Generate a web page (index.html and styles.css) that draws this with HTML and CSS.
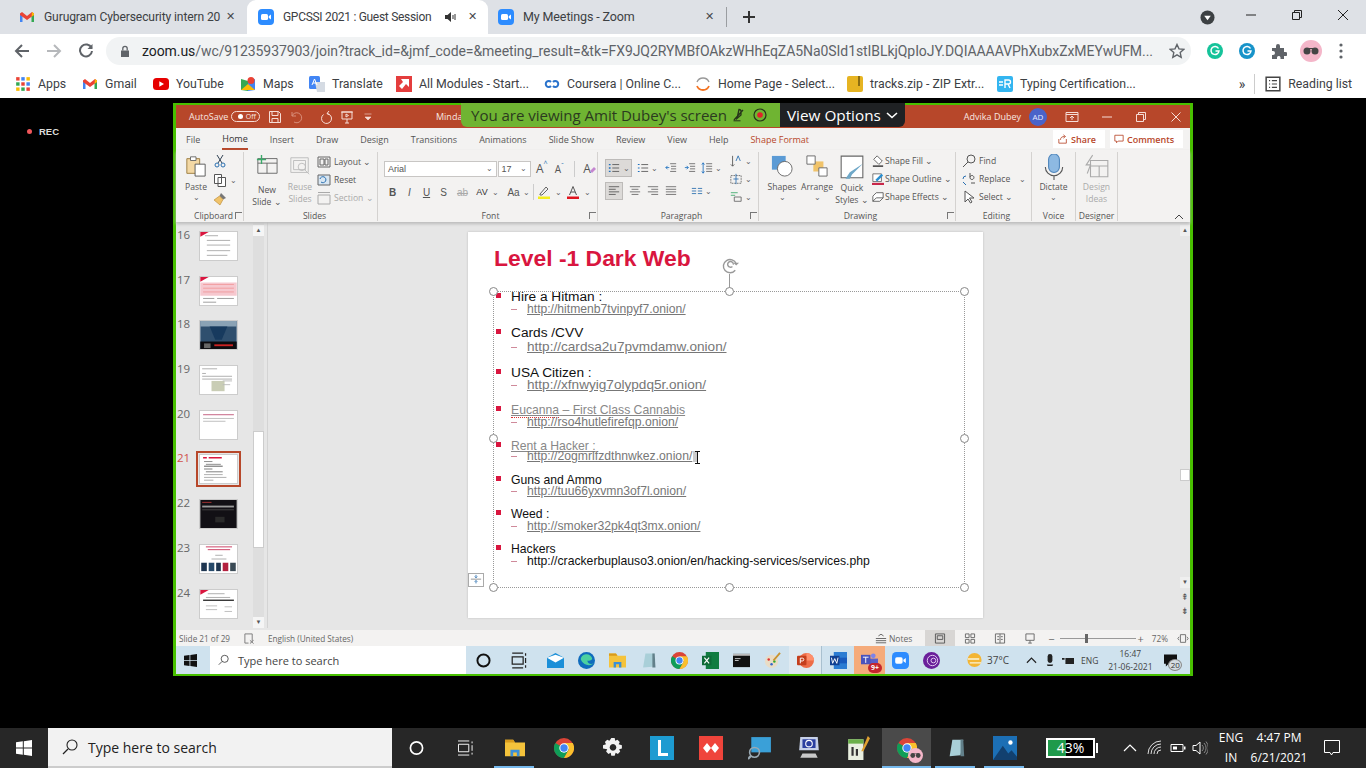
FILE: index.html
```html
<!DOCTYPE html>
<html lang="en">
<head>
    <meta charset="UTF-8">
    <title>GPCSSI 2021 : Guest Session</title>
    <link rel="stylesheet" href="styles.css">
</head>
<body>
<svg class="defs" width="0" height="0">
    <symbol id="i-zoom" viewBox="0 0 16 16"><rect width="16" height="16" rx="4" fill="#2d8cff"/><rect x="3" y="5" width="7" height="6" rx="1.5" fill="#fff"/><path d="M10.7 7.3 13 5.6v4.8l-2.3-1.700z" fill="#fff"/></symbol>
    <symbol id="i-gmail" viewBox="0 0 16 16"><path d="M1 4v9h2.500V7z" fill="#4285f4"/><path d="M15 4v9h-2.500V7z" fill="#34a853"/><path d="M1 4.500 3 3l5 4 5-4 2 1.500V6L8 11 1 6z" fill="#ea4335"/><path d="M13 3l2 1.500V6l-2.500 1.800z" fill="#fbbc04"/></symbol>
    <symbol id="i-chrome" viewBox="0 0 20 20"><circle cx="10" cy="10" r="10" fill="#db4437"/><path d="M10 10 1.300 5A10 10 0 0 0 10 20l5-8.700z" fill="#0f9d58"/><path d="M10 5h8.700A10 10 0 0 1 10 20l5-8.700z" fill="#fbc02d"/><circle cx="10" cy="10" r="4.700" fill="#fff"/><circle cx="10" cy="10" r="3.700" fill="#4285f4"/></symbol>
    <symbol id="i-win" viewBox="0 0 16 16"><path d="M0 2.300 6.800 1.300V7.600H0zM7.800 1.200 16 0V7.600H7.800zM0 8.500H6.800V14.700L0 13.700zM7.800 8.500H16V16L7.800 14.800z" fill="currentColor"/></symbol>
    <symbol id="i-folder" viewBox="0 0 22 20"><path d="M0 1h9l2 3h11v15H0z" fill="#f5c33b"/><path d="M0 1h9l2 3H0z" fill="#d99b1c"/><path d="M6 19v-7h10v7h-3v-4H9v4z" fill="#3a8fd8"/></symbol>
    <symbol id="i-note" viewBox="0 0 20 22"><path d="M6 2h12l-3 17-12 1z" fill="#a9cfd8"/><path d="M15 2h3l1 18h-4z" fill="#62808a"/></symbol>
    <symbol id="i-glasses" viewBox="0 0 22 22"><circle cx="11" cy="11" r="11" fill="#f4b6c9"/><circle cx="7" cy="11" r="3.500" fill="#444"/><circle cx="15" cy="11" r="3.500" fill="#444"/><path d="M7 8.500h8" stroke="#444"/></symbol>
</svg>

<header class="chrome">
    <div class="tabstrip">
        <div class="tab">
            <svg class="fav"><use href="#i-gmail"/></svg>
            <span class="tab-title">Gurugram Cybersecurity intern 20</span>
            <span class="tab-x">✕</span>
        </div>
        <div class="tab tab-active">
            <svg class="fav"><use href="#i-zoom"/></svg>
            <span class="tab-title tab-title-short">GPCSSI 2021 : Guest Session</span>
            <svg class="tab-sound" viewBox="0 0 12 12"><path d="M1 4h2.500L7 1v10L3.500 8H1z" fill="#333"/><path d="M9 4v4M11 3v6" stroke="#333"/></svg>
            <span class="tab-x">✕</span>
        </div>
        <div class="tab tab-last">
            <svg class="fav"><use href="#i-zoom"/></svg>
            <span class="tab-title">My Meetings - Zoom</span>
            <span class="tab-x">✕</span>
        </div>
        <span class="tab-sep"></span>
        <svg class="tab-new" viewBox="0 0 14 14"><path d="M7 1v12M1 7h12" stroke="#333" stroke-width="2"/></svg>
        <span class="spacer"></span>
        <svg class="win-menu" viewBox="0 0 16 16"><circle cx="8" cy="8" r="7.500" fill="#3c4043"/><path d="M4.500 6h7L8 11z" fill="#fff"/></svg>
        <svg class="win-btn" viewBox="0 0 12 12"><path d="M1 6h10" stroke="#222"/></svg>
        <svg class="win-btn" viewBox="0 0 12 12"><path d="M1.500 3.500h7v7h-7zM3.500 3.500v-2h7v7h-2" fill="none" stroke="#222"/></svg>
        <svg class="win-btn" viewBox="0 0 12 12"><path d="M1 1l10 10M11 1 1 11" stroke="#222"/></svg>
    </div>
    <div class="toolbar">
        <svg class="nav" viewBox="0 0 16 16"><path d="M15 8H2M8 2 2 8l6 6" fill="none" stroke="#5f6368" stroke-width="2"/></svg>
        <svg class="nav" viewBox="0 0 16 16"><path d="M1 8h13M8 2l6 6-6 6" fill="none" stroke="#b6b8bb" stroke-width="2"/></svg>
        <svg class="nav" viewBox="0 0 16 16"><path d="M13.500 5A6 6 0 1 0 14 8" fill="none" stroke="#5f6368" stroke-width="2"/><path d="M14.500 1v5h-5z" fill="#5f6368"/></svg>
        <div class="omnibox">
            <svg class="lock" viewBox="0 0 10 13"><path d="M1 5.500h8V12H1z" fill="#5f6368"/><path d="M2.800 5.500V3.500a2.200 2.200 0 0 1 4.400 0v2" fill="none" stroke="#5f6368" stroke-width="1.300"/></svg>
            <span class="url"><b>zoom.us</b>/wc/91235937903/join?track_id=&amp;jmf_code=&amp;meeting_result=&amp;tk=FX9JQ2RYMBfOAkzWHhEqZA5Na0SId1stIBLkjQpIoJY.DQIAAAAVPhXubxZxMEYwUFM...</span>
            <svg class="star" viewBox="0 0 16 16"><path d="M8 1.500l2 4.400 4.700.5-3.500 3.200 1 4.700L8 11.900l-4.200 2.400 1-4.700-3.500-3.200L6 5.900z" fill="none" stroke="#5f6368" stroke-width="1.400"/></svg>
        </div>
        <div class="ext">
            <svg class="ext-i" viewBox="0 0 16 16"><circle cx="8" cy="8" r="8" fill="#15c39a"/><path d="M11.500 5.500A4 4 0 1 0 12 8H8.500" fill="none" stroke="#fff" stroke-width="1.500"/></svg>
            <svg class="ext-i" viewBox="0 0 16 16"><circle cx="8" cy="8" r="8" fill="#1793c9"/><path d="M11.500 5.500A4 4 0 1 0 12 8H8.500" fill="none" stroke="#fff" stroke-width="1.500"/></svg>
            <svg class="ext-i" viewBox="0 0 16 16"><path d="M1 5h4V3a2 2 0 0 1 4 0v2h4v4h1.500a2 2 0 0 1 0 4H13v3H9.500v-1.500a1.800 1.800 0 0 0-3.500 0V16H1v-4h1a2 2 0 0 0 0-4H1z" fill="#5f6368"/></svg>
            <svg class="ext-av"><use href="#i-glasses"/></svg>
            <svg class="ext-dots" viewBox="0 0 4 16"><circle cx="2" cy="2" r="1.600" fill="#5f6368"/><circle cx="2" cy="8" r="1.600" fill="#5f6368"/><circle cx="2" cy="14" r="1.600" fill="#5f6368"/></svg>
        </div>
    </div>
    <div class="bookmarks">
        <span class="bm bm-apps"><svg class="bm-i" viewBox="0 0 14 14"><path d="M1 1h3v3H1z" fill="#ea4335"/><path d="M5.500 1h3v3h-3z" fill="#4285f4"/><path d="M10 1h3v3h-3z" fill="#fbbc04"/><path d="M1 5.500h3v3H1z" fill="#34a853"/><path d="M5.500 5.500h3v3h-3z" fill="#ea4335"/><path d="M10 5.500h3v3h-3z" fill="#4285f4"/><path d="M1 10h3v3H1z" fill="#fbbc04"/><path d="M5.500 10h3v3h-3z" fill="#34a853"/><path d="M10 10h3v3h-3z" fill="#ea4335"/></svg>Apps</span>
        <span class="bm bm-gmail"><svg class="bm-i"><use href="#i-gmail"/></svg>Gmail</span>
        <span class="bm bm-yt"><svg class="bm-i" viewBox="0 0 16 16"><rect y="2" width="16" height="12" rx="3.500" fill="#e60000"/><path d="M6.300 5.200 11 8l-4.700 2.800z" fill="#fff"/></svg>YouTube</span>
        <span class="bm bm-maps"><svg class="bm-i" viewBox="0 0 16 16"><path d="M1 3l7 2v10l-7-1z" fill="#34a853"/><path d="M8 5l7-2v11l-7 1z" fill="#4285f4"/><path d="M1 14 8 8l7 6z" fill="#fbbc04"/><circle cx="11" cy="4.500" r="3.500" fill="#ea4335"/></svg>Maps</span>
        <span class="bm bm-tr"><svg class="bm-i" viewBox="0 0 16 16"><rect width="11" height="13" rx="1.500" fill="#4285f4"/><path d="M6 6h10v10H8z" fill="#d5dbe3"/><path d="M3 9l2.500-6L8 9M4 7h3" fill="none" stroke="#fff"/></svg>Translate</span>
        <span class="bm bm-mod"><svg class="bm-i" viewBox="0 0 16 16"><rect width="16" height="16" fill="#e43d3d"/><path d="M5 3h8v8l-3-3-4 5-3-3 4-4z" fill="#fff"/></svg>All Modules - Start...</span>
        <span class="bm bm-cou"><svg class="bm-i" viewBox="0 0 16 16"><path d="M7 6a3 3 0 1 0 0 4M9 10a3 3 0 1 0 0-4" fill="none" stroke="#2a73cc" stroke-width="2"/></svg>Coursera | Online C...</span>
        <span class="bm bm-home"><svg class="bm-i" viewBox="0 0 16 16"><path d="M2 6a6.500 6.500 0 0 1 12 0" fill="none" stroke="#999" stroke-width="1.300"/><path d="M2 10a6.500 6.500 0 0 0 12 0" fill="none" stroke="#f47321" stroke-width="1.800"/></svg>Home Page - Select...</span>
        <span class="bm bm-zip"><svg class="bm-i" viewBox="0 0 16 16"><rect width="16" height="16" rx="2" fill="#e6b422"/><path d="M11 0h2v10h-2z" fill="#8a6d12"/></svg>tracks.zip - ZIP Extr...</span>
        <span class="bm bm-typ"><svg class="bm-i" viewBox="0 0 16 16"><rect width="16" height="16" rx="2" fill="#33b5f0"/><path d="M2 6h4M2 9h4M8 12V4h3.500a2 2 0 0 1 0 4H8m3 0 2 4" fill="none" stroke="#fff" stroke-width="1.400"/></svg>Typing Certification...</span>
        <span class="spacer"></span>
        <span class="bm-more">»</span>
        <span class="bm-sep"></span>
        <span class="bm bm-read"><svg class="bm-i" viewBox="0 0 14 14"><path d="M1 1h12v12H1z" fill="none" stroke="#444" stroke-width="1.300"/><path d="M3.500 4h1M6 4h4.500M3.500 7h1M6 7h4.500M3.500 10h1M6 10h4.500" stroke="#444"/></svg>Reading list</span>
    </div>
</header>

<main class="stage">
    <div class="rec"><span class="rec-dot"></span>REC</div>
    <div class="share">
        <div class="banner">
            <span>You are viewing Amit Dubey's screen</span>
            <svg class="banner-mic" viewBox="0 0 14 14"><path d="M8 1.500a2 2 0 0 1 2 2V7L6 10.500zM3 12 12 2" fill="none" stroke="#26331a" stroke-width="1.300"/><path d="M2.500 12.800h7" stroke="#26331a"/></svg>
            <svg class="banner-rec" viewBox="0 0 14 14"><circle cx="7" cy="7" r="6" fill="none" stroke="#26331a" stroke-width="1.200"/><circle cx="7" cy="7" r="2.800" fill="#e0222a"/></svg>
        </div>
        <div class="view-options">View Options<svg class="vo-chev" viewBox="0 0 12 7"><path d="M1 1l5 4.500L11 1" fill="none" stroke="#fff" stroke-width="1.600"/></svg></div>

        <div class="titlebar">
            <span class="autosave">AutoSave</span>
            <span class="toggle"><i></i>Off</span>
            <svg class="tb-i tb-save" viewBox="0 0 14 14"><path d="M1.500 1.500h9l2 2v9h-11zM4 1.500v4h6v-4M4 12.500v-4h6v4" fill="none" stroke="#f6ddd6"/></svg>
            <svg class="tb-i tb-undo" viewBox="0 0 14 14"><path d="M3 2v4h4M3 6a5 5 0 1 1 2 6" fill="none" stroke="#d98f7b"/></svg>
            <svg class="tb-i tb-redo" viewBox="0 0 14 14"><path d="M10 1l-2 2.500L10.500 5M8 3.500a5 5 0 1 1-3.500 1" fill="none" stroke="#f6ddd6"/></svg>
            <svg class="tb-i tb-pres" viewBox="0 0 14 14"><path d="M2 2h10v7H2zM1 2h12M7 9v4M5 13h4M6 4v3l2.500-1.500z" fill="none" stroke="#f6ddd6"/></svg>
            <svg class="tb-i tb-more" viewBox="0 0 14 14"><path d="M3.500 4h7M4 7h6l-3 3z" fill="#f6ddd6" stroke="#f6ddd6" stroke-width=".6"/></svg>
            <span class="doc-name">Minda</span>
            <span class="spacer"></span>
            <span class="user">Advika Dubey</span>
            <span class="avatar">AD</span>
            <svg class="tb-i tb-disp" viewBox="0 0 14 14"><path d="M1 2.500h12v9H1zM1 4.500h12M7 10V6M5 8l2-2 2 2" fill="none" stroke="#f6ddd6"/></svg>
            <svg class="tb-i tb-min" viewBox="0 0 14 14"><path d="M2 7h10" stroke="#f6ddd6"/></svg>
            <svg class="tb-i tb-max" viewBox="0 0 14 14"><path d="M2.500 4.500h7v7h-7zM4.500 4.500v-2h7v7h-2" fill="none" stroke="#f6ddd6"/></svg>
            <svg class="tb-i tb-close" viewBox="0 0 14 14"><path d="M2.500 2.500l9 9M11.500 2.500l-9 9" stroke="#f6ddd6"/></svg>
        </div>

        <nav class="tabs">
            <span>File</span>
            <span class="tabs-on">Home</span>
            <span>Insert</span>
            <span>Draw</span>
            <span>Design</span>
            <span>Transitions</span>
            <span>Animations</span>
            <span>Slide Show</span>
            <span>Review</span>
            <span>View</span>
            <span>Help</span>
            <span class="tabs-ctx">Shape Format</span>
            <span class="spacer"></span>
            <span class="tabs-btn tabs-share"><svg viewBox="0 0 12 12" class="tabs-btn-i"><path d="M1 6v5h9V6M3 7c0-3 2-4 5-4M6.500 1 9 3 6.500 5" fill="none" stroke="#b7472a"/></svg>Share</span>
            <span class="tabs-btn tabs-comm"><svg viewBox="0 0 12 12" class="tabs-btn-i"><path d="M1 1.500h10v7H5l-2 2v-2H1z" fill="none" stroke="#b7472a"/></svg>Comments</span>
        </nav>

        <div class="ribbon">
            <section class="grp grp-clip">
                <div class="grp-body">
                    <div class="big big-paste">
                        <svg class="big-i" viewBox="0 0 24 24"><path d="M2 4h14v16H2z" fill="#f3d8a4" stroke="#9a7a3c"/><path d="M6 2h6v4H6z" fill="#fff" stroke="#666"/><path d="M11 10h11v13H11z" fill="#fff" stroke="#555"/></svg>
                        <span>Paste</span><span class="chev">⌄</span>
                    </div>
                    <div class="col col-clip">
                        <svg class="ico" viewBox="0 0 14 14"><path d="M4 1l5 8M10 1 5 9" stroke="#345" fill="none"/><circle cx="4" cy="11" r="2" fill="none" stroke="#2a6fb0"/><circle cx="10" cy="11" r="2" fill="none" stroke="#2a6fb0"/></svg>
                        <span class="row"><svg class="ico" viewBox="0 0 14 14"><path d="M1.500 1.500h7v9h-7zM5 4.500h7.500v9H5z" fill="#fff" stroke="#555"/></svg><span class="chev">⌄</span></span>
                        <svg class="ico" viewBox="0 0 14 14"><path d="M8 1l5 5-3 1.500L6.500 4z" fill="#777"/><path d="M6.500 4 10 7.500 7 13 1 8z" fill="#f0c36a" stroke="#b8862f" stroke-width=".6"/></svg>
                    </div>
                </div>
                <div class="grp-label">Clipboard<i class="launch"></i></div>
            </section>
            <section class="grp grp-slides">
                <div class="grp-body">
                    <div class="big big-new">
                        <svg class="big-i" viewBox="0 0 24 24"><path d="M2 5h21v16H2zM2 10h21M12 10v11" fill="none" stroke="#666"/><path d="M1 6h10M6 1v10" stroke="#3ca96a" stroke-width="1.500"/></svg>
                        <span class="big-gap">New</span><span>Slide ⌄</span>
                    </div>
                    <div class="big big-reuse off">
                        <svg class="big-i" viewBox="0 0 24 24"><path d="M2 3h19v16H2zM5 6h13v10H5z" fill="none" stroke="#bbb"/><circle cx="14" cy="13" r="4" fill="none" stroke="#bbb"/><path d="M17 16l5 5" stroke="#bbb"/></svg>
                        <span>Reuse</span><span>Slides</span>
                    </div>
                    <div class="col col-slides">
                        <span class="row"><svg class="ico" viewBox="0 0 14 14"><path d="M1 2h12v10H1zM3 4h4v6H3zM8 4h3v6H8z" fill="none" stroke="#666"/></svg>Layout ⌄</span>
                        <span class="row"><svg class="ico" viewBox="0 0 14 14"><path d="M1 2h12v10H1z" fill="#d8e6f2" stroke="#666"/><path d="M3 6a3 3 0 1 1 1 3" fill="none" stroke="#2a6fb0"/></svg>Reset</span>
                        <span class="row off"><svg class="ico" viewBox="0 0 14 14"><path d="M1 1.500h12M1 4h12v9H1z" fill="none" stroke="#aaa"/></svg>Section ⌄</span>
                    </div>
                </div>
                <div class="grp-label">Slides</div>
            </section>
            <section class="grp grp-font">
                <div class="grp-body grp-rows">
                    <div class="row font-row1">
                        <span class="box box-font">Arial<b class="chev">⌄</b></span>
                        <span class="box box-size">17<b class="chev">⌄</b></span>
                        <span class="glyph-a">A<sup>^</sup></span>
                        <span class="glyph-a glyph-a2">A<sup>ˇ</sup></span>
                        <i class="vsep"></i>
                        <span class="glyph-a glyph-clear">A<svg viewBox="0 0 8 8" class="eraser"><path d="M1 5l4-4 2 2-4 4z" fill="#c586d0"/></svg></span>
                    </div>
                    <div class="row font-row2">
                        <b class="fmt">B</b><em class="fmt">I</em><u class="fmt">U</u><span class="fmt fmt-s">S</span><s class="fmt fmt-ab">ab</s>
                        <span class="fmt fmt-av">AV</span><span class="chev">⌄</span>
                        <span class="fmt fmt-aa">Aa</span><span class="chev">⌄</span>
                        <i class="vsep"></i>
                        <span class="fmt fmt-hl">
                            <svg class="ico" viewBox="0 0 14 14"><path d="M3 9l6-7 2 2-6 6H3z" fill="none" stroke="#666"/><path d="M1 11.500h12V14H1z" fill="#f5ee1c"/></svg></span><span class="chev">⌄</span>
                        <span class="fmt fmt-col">
                            <svg class="ico" viewBox="0 0 14 14"><path d="M3.500 10 7 1.500l3.500 8.500M5 7h4" fill="none" stroke="#555"/><path d="M1 11.500h12V14H1z" fill="#e0141e"/></svg></span><span class="chev">⌄</span>
                    </div>
                </div>
                <div class="grp-label">Font<i class="launch"></i></div>
            </section>
            <section class="grp grp-para">
                <div class="grp-body grp-para-body">
                    <div class="grp-rows">
                        <div class="row para-row1">
                            <span class="para-on para-bul"><svg class="ico" viewBox="0 0 14 14"><path d="M1 3h2M1 7h2M1 11h2" stroke="#1e70c0" stroke-width="1.500"/><path d="M5 3h8M5 7h8M5 11h8" stroke="#555"/></svg><span class="chev">⌄</span></span>
                            <span class="para-ic"><svg class="ico" viewBox="0 0 14 14"><path d="M1 3h2M1 7h2M1 11h2" stroke="#1e70c0" stroke-width="1.200"/><path d="M5 3h8M5 7h8M5 11h8" stroke="#555"/></svg><span class="chev">⌄</span></span>
                            <svg class="ico para-in" viewBox="0 0 14 14"><path d="M6 2h7M7 5h6M7 8h6M6 11h7" stroke="#666"/><path d="M5 6.500H1M3 4.500l-2 2 2 2" fill="none" stroke="#1e70c0"/></svg>
                            <svg class="ico para-in" viewBox="0 0 14 14"><path d="M6 2h7M7 5h6M7 8h6M6 11h7" stroke="#666"/><path d="M1 6.500h4M3 4.500l2 2-2 2" fill="none" stroke="#1e70c0"/></svg>
                            <span class="para-ic"><svg class="ico" viewBox="0 0 14 14"><path d="M6 2h7M6 5h7M6 8h7M6 11h7" stroke="#666"/><path d="M2.500 1v12M1 3l1.500-2L4 3M1 11l1.500 2L4 11" fill="none" stroke="#1e70c0"/></svg><span class="chev">⌄</span></span>
                        </div>
                        <div class="row para-row2">
                            <span class="para-on para-left"><svg class="ico" viewBox="0 0 14 14"><path d="M1 2h12M1 5h8M1 8h12M1 11h8" stroke="#555"/></svg></span>
                            <svg class="ico para-al" viewBox="0 0 14 14"><path d="M1 2h12M3 5h8M1 8h12M3 11h8" stroke="#666"/></svg>
                            <svg class="ico para-al" viewBox="0 0 14 14"><path d="M1 2h12M5 5h8M1 8h12M5 11h8" stroke="#666"/></svg>
                            <svg class="ico para-al" viewBox="0 0 14 14"><path d="M1 2h12M1 5h12M1 8h12M1 11h12" stroke="#666"/></svg>
                            <span class="para-ic para-cols"><svg class="ico" viewBox="0 0 14 14"><path d="M1 4h5M8 4h5M1 7h5M8 7h5M1 10h5M8 10h5" stroke="#2a6fb0"/></svg><span class="chev">⌄</span></span>
                        </div>
                    </div>
                    <div class="col col-para">
                        <span class="row"><svg class="ico" viewBox="0 0 14 14"><path d="M3 1v12M1 11l2 2 2-2" fill="none" stroke="#555"/><path d="M7 7l2.500-6L12 7" fill="none" stroke="#2a6fb0"/></svg><span class="chev">⌄</span></span>
                        <span class="row"><svg class="ico" viewBox="0 0 14 14"><path d="M1 3h12v9H1z" fill="none" stroke="#666" stroke-dasharray="2 1"/><path d="M7 1v12M4 7h6" stroke="#2a6fb0"/></svg><span class="chev">⌄</span></span>
                        <span class="row"><svg class="ico" viewBox="0 0 14 14"><path d="M1 2h8M1 5h5" stroke="#3ca96a"/><path d="M5 7h8v5H5z" fill="none" stroke="#666"/></svg><span class="chev">⌄</span></span>
                    </div>
                </div>
                <div class="grp-label">Paragraph<i class="launch"></i></div>
            </section>
            <section class="grp grp-draw">
                <div class="grp-body">
                    <div class="big big-draw">
                        <svg class="big-i" viewBox="0 0 24 24"><path d="M1 1h15v15H1z" fill="#5b9bd5"/><circle cx="15" cy="15" r="8" fill="#fff" stroke="#666"/></svg>
                        <span>Shapes</span><span class="chev">⌄</span>
                    </div>
                    <div class="big big-draw">
                        <svg class="big-i" viewBox="0 0 24 24"><path d="M8 7h11v11H8z" fill="#f0c36a"/><path d="M1 1h9v9H1zM14 14h9v9h-9z" fill="#fff" stroke="#666"/></svg>
                        <span>Arrange</span><span class="chev">⌄</span>
                    </div>
                    <div class="big big-draw">
                        <svg class="big-i big-i-lg" viewBox="0 0 24 24"><path d="M2 1h20v20H2z" fill="#fff" stroke="#666"/><path d="M22 8 12 18l-2 4-4 0 2-3 2-3z" fill="#6fa8c8"/></svg>
                        <span>Quick</span><span>Styles ⌄</span>
                    </div>
                    <div class="col col-draw">
                        <span class="row"><svg class="ico" viewBox="0 0 14 14"><path d="M6 1l6 6-4 4-6-6z" fill="#fff" stroke="#555"/><path d="M1 12h12v2H1z" fill="#555"/></svg>Shape Fill ⌄</span>
                        <span class="row"><svg class="ico" viewBox="0 0 14 14"><path d="M1 1h10v9H1z" fill="#fff" stroke="#666"/><path d="M4 8l7-7 2 2-7 7z" fill="#2a8fd0"/><path d="M0 11.500h14V14H0z" fill="#c8284a"/></svg>Shape Outline ⌄</span>
                        <span class="row"><svg class="ico" viewBox="0 0 14 14"><path d="M5 2h8v6l-4 4H1V6z" fill="#fff" stroke="#555"/><path d="M1 12 5 8h8" stroke="#555" fill="none"/></svg>Shape Effects ⌄</span>
                    </div>
                </div>
                <div class="grp-label">Drawing<i class="launch"></i></div>
            </section>
            <section class="grp grp-edit">
                <div class="grp-body">
                    <div class="col col-edit">
                        <span class="row"><svg class="ico" viewBox="0 0 14 14"><circle cx="9" cy="5" r="4" fill="none" stroke="#555"/><path d="M6 8 1 13" stroke="#555"/></svg>Find</span>
                        <span class="row"><svg class="ico" viewBox="0 0 14 14"><path d="M1 7a3 3 0 0 1 3-3M1 10l3 3" fill="none" stroke="#2a6fb0"/><path d="M8 1v5a2 2 0 1 0 0-1M9 11h4" fill="none" stroke="#555"/></svg>Replace<span class="chev chev-far">⌄</span></span>
                        <span class="row"><svg class="ico" viewBox="0 0 14 14"><path d="M3 1v11l3-3 2.500 4 1.500-1-2.500-4H12z" fill="#fff" stroke="#555"/></svg>Select ⌄</span>
                    </div>
                </div>
                <div class="grp-label">Editing</div>
            </section>
            <section class="grp grp-voice">
                <div class="grp-body">
                    <div class="big big-dict">
                        <svg class="big-i big-i-lg" viewBox="0 0 24 24"><rect x="7" y="0" width="10" height="17" rx="5" fill="#8db9e2" stroke="#4f86bc"/><path d="M4 12a8 8 0 0 0 16 0M12 20v4" fill="none" stroke="#555"/></svg>
                        <span>Dictate</span><span class="chev">⌄</span>
                    </div>
                </div>
                <div class="grp-label">Voice</div>
            </section>
            <section class="grp grp-design">
                <div class="grp-body">
                    <div class="big big-dict off">
                        <svg class="big-i big-i-lg" viewBox="0 0 24 24"><path d="M6 6h16v15H6zM6 11h16M14 11v10" fill="none" stroke="#aaa"/><path d="M8 1 2 10h4l-3 8" fill="none" stroke="#aaa"/></svg>
                        <span>Design</span><span>Ideas</span>
                    </div>
                </div>
                <div class="grp-label">Designer</div>
            </section>
            <svg class="ribbon-fold" viewBox="0 0 10 6"><path d="M1 5l4-4 4 4" fill="none" stroke="#444"/></svg>
        </div>

        <div class="workspace">
            <aside class="thumbs">
                <div class="thumb-list">
                    <div class="t-row"><span class="t-num">16</span><svg class="thumb" viewBox="0 0 39 30"><path d="M0 0h9L0 5z" fill="#d9163f"/><path d="M5 4h14M7 9h25M7 14h25M7 20h25M7 25h22" stroke="#aaa"/></svg></div>
                    <div class="t-row"><span class="t-num">17</span><svg class="thumb" viewBox="0 0 39 30"><path d="M0 0h9L0 5z" fill="#d9163f"/><path d="M0 6h39v14H0z" fill="#f6c8cf"/><path d="M3 8h33M3 12h33M3 16h33" stroke="#e88" stroke-width=".7"/><path d="M3 23h12M18 23h18M3 27h14" stroke="#999"/></svg></div>
                    <div class="t-row"><span class="t-num">18</span><svg class="thumb" viewBox="0 0 39 30"><rect width="39" height="30" fill="#2f4f6e"/><path d="M0 0h39v6H0z" fill="#8aa2b5"/><path d="M10 6h19l-6 14h-7z" fill="#173a5e"/><rect y="22" width="39" height="8" fill="#0c0c10"/><rect x="4" y="24" width="7" height="5" fill="#666"/><rect x="15" y="25" width="20" height="2" fill="#c22"/></svg></div>
                    <div class="t-row"><span class="t-num">19</span><svg class="thumb" viewBox="0 0 39 30"><path d="M2 3h16M2 8h4M2 11h32M2 14h32" stroke="#aaa"/><path d="M12 16h14v11H12z" fill="#c9cdb5"/><path d="M24 16h10M24 20h8" stroke="#bbb"/></svg></div>
                    <div class="t-row"><span class="t-num">20</span><svg class="thumb" viewBox="0 0 39 30"><path d="M3 4h33" stroke="#c2587c"/><path d="M3 8h33M3 11h24" stroke="#bbb"/></svg></div>
                    <div class="t-row t-on"><span class="t-num">21</span><svg class="thumb" viewBox="0 0 39 30"><path d="M3 3h4M9 3h14" stroke="#d9163f" stroke-width="1.500"/><path d="M4 7h9M6 10h16" stroke="#888"/><path d="M4 12h20" stroke="#555"/><path d="M4 15h9M6 18h18" stroke="#777"/><path d="M4 21h20M4 24h24M4 27h10" stroke="#aaa"/></svg></div>
                    <div class="t-row"><span class="t-num">22</span><svg class="thumb" viewBox="0 0 39 30"><rect width="39" height="30" fill="#121015"/><path d="M2 2h10v1H2z" fill="#a33"/><path d="M2 6h34v2H2z" fill="#999"/><path d="M2 10h34v1H2z" fill="#444"/><path d="M16 18h10v6H16z" fill="#2a2a2a"/></svg></div>
                    <div class="t-row"><span class="t-num">23</span><svg class="thumb" viewBox="0 0 39 30"><path d="M6 2h28M8 5h24" stroke="#c8385c"/><path d="M16 11h8M12 15h16" stroke="#aaa"/><path d="M1 19h6v9H1z" fill="#1e3550"/><path d="M9 19h6v9H9z" fill="#274a6b"/><path d="M17 19h5v9h-5z" fill="#1e3550"/><path d="M24 19h6v9h-6z" fill="#b3213f"/><path d="M32 19h6v9h-6z" fill="#3a4a55"/></svg></div>
                    <div class="t-row"><span class="t-num">24</span><svg class="thumb" viewBox="0 0 39 30"><path d="M0 0h9L0 5z" fill="#d9163f"/><path d="M8 4h18M6 8h26" stroke="#aaa"/><path d="M3 11h33" stroke="#333" stroke-width="1.500"/><path d="M6 17h12M6 21h12M26 18h8M26 23h8" stroke="#bbb"/></svg></div>
                </div>
                <div class="t-scroll">
                    <span class="sc-btn">▲</span>
                    <span class="sc-track"><i class="sc-thumb"></i></span>
                    <span class="sc-btn">▼</span>
                </div>
            </aside>
            <div class="editor">
                <article class="slide">
                    <h1 class="slide-title">Level -1 Dark Web</h1>
                    <div class="frame">
                        <ul class="list">
                            <li class="li li1"><div class="head"><i class="sq"></i>Hire a Hitman :</div><div class="sub"><i class="dash"></i><a>http://hitmenb7tvinpyf7.onion/</a></div></li>
                            <li class="li li2"><div class="head"><i class="sq"></i>Cards /CVV</div><div class="sub"><i class="dash"></i><a>http://cardsa2u7pvmdamw.onion/</a></div></li>
                            <li class="li li3"><div class="head"><i class="sq"></i>USA Citizen :</div><div class="sub"><i class="dash"></i><a>http://xfnwyig7olypdq5r.onion/</a></div></li>
                            <li class="li li4"><div class="head head-link"><i class="sq"></i><span><span class="spell">Eucanna</span> – First Class Cannabis</span></div><div class="sub"><i class="dash"></i><a>http://rso4hutlefirefqp.onion/</a></div></li>
                            <li class="li li5"><div class="head head-link"><i class="sq"></i><span>Rent a Hacker :</span></div><div class="sub"><i class="dash"></i><a>http://2ogmrlfzdthnwkez.onion/</a><i class="sel"></i></div></li>
                            <li class="li li6"><div class="head"><i class="sq"></i>Guns and Ammo</div><div class="sub"><i class="dash"></i><a>http://tuu66yxvmn3of7l.onion/</a></div></li>
                            <li class="li li7"><div class="head"><i class="sq"></i>Weed :</div><div class="sub"><i class="dash"></i><a>http://smoker32pk4qt3mx.onion/</a></div></li>
                            <li class="li li8"><div class="head"><i class="sq"></i>Hackers</div><div class="sub sub-plain"><i class="dash"></i><span>http://crackerbuplauso3.onion/en/hacking-services/services.php</span></div></li>
                        </ul>
                        <i class="hd hd-tl"></i><i class="hd hd-tc"></i><i class="hd hd-tr"></i>
                        <i class="hd hd-ml"></i><i class="hd hd-mr"></i>
                        <i class="hd hd-bl"></i><i class="hd hd-bc"></i><i class="hd hd-br"></i>
                        <i class="rot-line"></i>
                        <svg class="rot" viewBox="0 0 20 20"><path d="M15 14a7 7 0 1 1 1-7M12 10a3 3 0 1 1 1-2" fill="none" stroke="#999" stroke-width="1.500"/><path d="M19 6l-3 3-3-3z" fill="#999"/></svg>
                        <svg class="ibeam" viewBox="0 0 7 13"><path d="M1 .5h5M1 12.500h5M3.500 .5v12" stroke="#111" fill="none"/></svg>
                        <span class="autofit"><svg viewBox="0 0 14 12"><path d="M1 6h12" stroke="#888"/><path d="M7 1v3M5.500 3 7 4.500 8.500 3M7 11V8M5.500 9 7 7.500 8.500 9" stroke="#2a6fb0" fill="none"/></svg></span>
                    </div>
                </article>
            </div>
            <div class="e-scroll">
                <span class="sc-btn">▲</span>
                <span class="sc-track"><i class="sc-thumb-r"></i></span>
                <span class="sc-btn">▼</span>
                <span class="sc-btn">⇞</span>
                <span class="sc-btn">⇟</span>
            </div>
        </div>

        <footer class="status">
            <span class="st-slide">Slide 21 of 29</span>
            <svg class="st-i" viewBox="0 0 12 12"><path d="M1.500 1h8v8M1.500 1v10h4" fill="none" stroke="#777"/><path d="M7 8l4 3.500M11 8l-4 3.500" stroke="#777"/></svg>
            <span>English (United States)</span>
            <span class="spacer"></span>
            <span class="st-notes"><svg class="st-i" viewBox="0 0 14 12"><path d="M4 3l3-2 3 2M1 6h12M1 8.500h12M1 11h12" fill="none" stroke="#555"/></svg>Notes</span>
            <span class="st-view st-view-on"><svg class="st-i" viewBox="0 0 12 12"><path d="M1 1h10v10H1zM3 3h6v4H3z" fill="none" stroke="#555"/></svg></span>
            <span class="st-view"><svg class="st-i" viewBox="0 0 12 12"><path d="M1 1h4v4H1zM7 1h4v4H7zM1 7h4v4H1zM7 7h4v4H7z" fill="none" stroke="#666"/></svg></span>
            <span class="st-view"><svg class="st-i" viewBox="0 0 12 12"><path d="M1 1h10v10H1zM6 1v10M3 4h2M7 4h2M3 7h2M7 7h2" fill="none" stroke="#666"/></svg></span>
            <span class="st-view"><svg class="st-i" viewBox="0 0 12 12"><path d="M1.500 1h9v7h-9zM6 8v3M4 11h4" fill="none" stroke="#666"/></svg></span>
            <span class="zoom-minus">−</span>
            <span class="zoom-track"><i></i></span>
            <span class="zoom-plus">+</span>
            <span class="zoom-pct">72%</span>
            <svg class="st-i st-fit" viewBox="0 0 14 12"><path d="M4 1.500h6v9H4zM2.500 4 1 6l1.500 2M11.500 4 13 6l-1.500 2" fill="none" stroke="#666"/></svg>
        </footer>

        <div class="rtask">
            <svg class="rt-win"><use href="#i-win"/></svg>
            <div class="rt-search">
                <svg class="rt-lens" viewBox="0 0 14 14"><circle cx="8.500" cy="5.500" r="4.500" fill="none" stroke="#333"/><path d="M5 9l-4 4" stroke="#333"/></svg>
                Type here to search
            </div>
            <span class="rt-ic rt-first"><svg viewBox="0 0 14 14"><circle cx="7" cy="7" r="5" fill="none" stroke="#111" stroke-width="1.600"/></svg></span>
            <span class="rt-ic rt-view"><svg viewBox="0 0 14 14"><path d="M1 1h9M1 13h9M1 4h9v6H1zM12 1v2M12 5v4M12 11v2" fill="none" stroke="#222"/></svg></span>
            <span class="rt-ic"><svg viewBox="0 0 18 16"><path d="M0 5 9 0l9 5v11H0z" fill="#1b8fd8"/><path d="M0 5l9 5 9-5-9-3z" fill="#fff"/></svg></span>
            <span class="rt-ic"><svg viewBox="0 0 18 18"><circle cx="9" cy="9" r="9" fill="#0f6cbd"/><path d="M3 8a6 5 0 0 1 12-1c0 2-3 2.500-5 2 0 3 3 5 7 3a9 9 0 0 1-14-4z" fill="#4bd0a0"/></svg></span>
            <span class="rt-ic"><svg viewBox="0 0 22 20"><use href="#i-folder"/></svg></span>
            <span class="rt-ic"><svg viewBox="0 0 20 22"><use href="#i-note"/></svg></span>
            <span class="rt-ic"><svg viewBox="0 0 20 20"><use href="#i-chrome"/></svg></span>
            <span class="rt-ic"><svg viewBox="0 0 18 18"><rect x="4" width="14" height="18" fill="#107c41"/><rect y="4" width="10" height="10" fill="#0e6a38"/><path d="M2.500 6l5 6M7.500 6l-5 6" stroke="#fff" stroke-width="1.200"/></svg></span>
            <span class="rt-ic"><svg viewBox="0 0 18 14"><rect width="18" height="14" fill="#111"/><rect y="0" width="18" height="2" fill="#bbb"/><path d="M2 5h6M2 7h4" stroke="#ccc"/></svg></span>
            <span class="rt-ic"><svg viewBox="0 0 18 18"><circle cx="8" cy="10" r="7" fill="#e9dcc5"/><circle cx="5" cy="8" r="1.300" fill="#d33"/><circle cx="8" cy="13" r="1.300" fill="#36c"/><circle cx="11" cy="10" r="1.300" fill="#3a3"/><path d="M10 9l7-8" stroke="#c9932e" stroke-width="2"/></svg></span>
            <span class="rt-ic rt-ppt"><svg viewBox="0 0 18 18"><circle cx="10" cy="9" r="8" fill="#ed6c47"/><path d="M10 1a8 8 0 0 1 8 8h-8z" fill="#ff8f6b"/><rect y="4" width="10" height="10" rx="1" fill="#c43e1c"/><path d="M3.500 12V6.500h2.200a1.500 1.500 0 0 1 0 3H3.500" fill="none" stroke="#fff"/></svg></span>
            <span class="rt-ic rt-word"><svg viewBox="0 0 18 18"><rect x="4" width="14" height="18" fill="#2b7cd3"/><rect x="4" y="6" width="14" height="6" fill="#185abd"/><rect y="4" width="10" height="10" fill="#103f91"/><path d="M1.500 6l1.300 6L5 7l2.200 5 1.300-6" fill="none" stroke="#fff"/></svg></span>
            <span class="rt-ic rt-teams"><svg viewBox="0 0 18 18"><circle cx="13" cy="4" r="2.500" fill="#7b83eb"/><rect x="9" y="7" width="9" height="8" fill="#5b5fc7"/><rect y="3" width="10" height="10" fill="#4b53bc"/><path d="M2 5.500h6M5 5.500v6" stroke="#fff"/></svg><b class="rt-badge">9+</b></span>
            <span class="rt-ic"><svg viewBox="0 0 16 16"><use href="#i-zoom"/></svg></span>
            <span class="rt-ic"><svg viewBox="0 0 18 18"><circle cx="9" cy="9" r="9" fill="#6a1f9a"/><circle cx="10" cy="9" r="5.500" fill="none" stroke="#e6d3f2"/><circle cx="11" cy="9" r="2.500" fill="none" stroke="#e6d3f2"/></svg></span>
            <span class="rt-weather"><svg viewBox="0 0 18 16"><circle cx="9" cy="8" r="7.500" fill="#f3b534"/><path d="M2 7h12M4 11h12" stroke="#fbf3d6" stroke-width="1.500"/></svg></span>
            <span class="rt-temp">37°C</span>
            <svg class="rt-tr rt-caret" viewBox="0 0 12 8"><path d="M1 7l5-5 5 5" fill="none" stroke="#222" stroke-width="1.300"/></svg>
            <svg class="rt-tr rt-mic" viewBox="0 0 10 16"><rect x="2" width="6" height="11" rx="3" fill="#222"/><path d="M1 13h8l-1 2H2z" fill="#222"/></svg>
            <svg class="rt-tr rt-kb" viewBox="0 0 14 10"><path d="M0 2h3v2H0zM4 2h10v7H4z" fill="#222"/></svg>
            <span class="rt-eng">ENG</span>
            <span class="rt-clock">16:47<br>21-06-2021</span>
            <span class="rt-note"><svg viewBox="0 0 14 13"><path d="M0 0h14v10H5l-3 3v-3H0z" fill="#111"/></svg><b>20</b></span>
        </div>
    </div>
</main>

<footer class="taskbar">
    <svg class="task-win"><use href="#i-win"/></svg>
    <div class="task-search">
        <svg class="task-lens" viewBox="0 0 16 16"><circle cx="10" cy="6" r="5" fill="none" stroke="#222" stroke-width="1.100"/><path d="M6 10l-5 5" stroke="#222" stroke-width="1.300"/></svg>
        Type here to search
    </div>
    <span class="ti ti-sm"><svg viewBox="0 0 16 16"><circle cx="8" cy="8" r="6.500" fill="none" stroke="#fff" stroke-width="1.800"/></svg></span>
    <span class="ti ti-sm"><svg viewBox="0 0 16 16"><path d="M0 .5h12M0 15.500h12M.5 4h11v8H.5zM15 1v2M15 5v6M15 13v2" fill="none" stroke="#fff"/></svg></span>
    <span class="ti ti-open"><svg viewBox="0 0 22 20"><use href="#i-folder"/></svg></span>
    <span class="ti"><svg viewBox="0 0 20 20"><use href="#i-chrome"/></svg></span>
    <span class="ti"><svg viewBox="0 0 18 18"><path d="M7.500 0h3l.5 2.500 2-.9 2.100 2.100-1 2L17 6.500v3l-2.500.7 1 2-2.100 2.100-2-1-.9 2.700h-3l-.6-2.700-2 1-2.100-2.100 1-2L0 9.500v-3l2.700-.8-1-2L3.800 1.600l2 .9zM9 5.500a3 3 0 1 0 .01 0z" fill="#f2f2f2" fill-rule="evenodd"/></svg></span>
    <span class="ti"><svg viewBox="0 0 24 24" class="ti-sq"><rect width="24" height="24" fill="#1d9bd1"/><path d="M8 4h3v13h7v3H8z" fill="#fff"/></svg></span>
    <span class="ti"><svg viewBox="0 0 24 24" class="ti-sq"><rect width="24" height="24" fill="#ef443b"/><path d="M8 7l4 5-4 5-4-5zM16 7l4 5-4 5-4-5z" fill="#fff"/></svg></span>
    <span class="ti"><svg viewBox="0 0 22 22" class="ti-sq"><rect x="3" y="1" width="18" height="14" fill="#3aa0d8"/><circle cx="6" cy="15" r="4.500" fill="none" stroke="#9aa9b3" stroke-width="1.500"/><path d="M3 18l-3 3" stroke="#9aa9b3" stroke-width="2"/></svg></span>
    <span class="ti"><svg viewBox="0 0 22 22" class="ti-sq"><path d="M3 1h16l1 12H2z" fill="#c6d0e8"/><path d="M5 3h12v8H5z" fill="#2b3fa0"/><circle cx="11" cy="7" r="3" fill="none" stroke="#fff"/><path d="M5 16h12l2 4H3z" fill="#c9c9c9"/></svg></span>
    <span class="ti"><svg viewBox="0 0 22 22" class="ti-sq"><path d="M2 3h14v19H2z" fill="#e9efe0"/><path d="M2 3h14v4H2z" fill="#6bb04a"/><path d="M5 10h2v8H5zM9 12h2v6H9z" fill="#333"/><path d="M20 0l2 2-6 12h-2z" fill="#e0a030"/></svg></span>
    <span class="ti ti-chrome"><svg viewBox="0 0 20 20"><use href="#i-chrome"/></svg><svg class="ti-over"><use href="#i-glasses"/></svg></span>
    <span class="ti ti-open"><svg viewBox="0 0 20 22"><use href="#i-note"/></svg></span>
    <span class="ti ti-open"><svg viewBox="0 0 22 22" class="ti-sq"><rect width="22" height="22" fill="#1c6fb5"/><path d="M0 22 9 9l5 7 3-3 5 6v3z" fill="#12406f"/><circle cx="16" cy="6" r="2" fill="#fff"/></svg></span>
    <span class="batt"><span class="batt-fill"></span><span class="batt-txt">43%</span></span>
    <span class="spacer"></span>
    <svg class="tray tray-caret" viewBox="0 0 14 8"><path d="M1 7l6-6 6 6" fill="none" stroke="#fff" stroke-width="1.200"/></svg>
    <svg class="tray tray-wifi" viewBox="0 0 16 16"><path d="M1 14A13 13 0 0 1 14 1M4 14A10 10 0 0 1 14 4M7 14a7 7 0 0 1 7-7M10 14a4 4 0 0 1 4-4" fill="none" stroke="#ddd"/></svg>
    <svg class="tray" viewBox="0 0 16 16"><path d="M1 4.500h12v7H1z" fill="none" stroke="#fff"/><path d="M3 6.500h4v3H3z" fill="#fff"/><path d="M14 6.500h1.500v3H14z" fill="#fff"/></svg>
    <svg class="tray" viewBox="0 0 16 16"><path d="M1 5.500h3L8 2v12l-4-3.500H1z" fill="none" stroke="#fff"/><path d="M10 5a4 4 0 0 1 0 6M12 3a7 7 0 0 1 0 10M14 1.500a10 10 0 0 1 0 13" fill="none" stroke="#888"/></svg>
    <span class="task-lang">ENG<br>IN</span>
    <span class="task-clock">4:47 PM<br>6/21/2021</span>
    <svg class="task-note" viewBox="0 0 16 16"><path d="M.5.500h15v12H9l-1.500 2.500-1.500-2.500H.5z" fill="none" stroke="#fff"/></svg>
</footer>
</body>
</html>
```

FILE: styles.css
```css
* {
    box-sizing: border-box;
}
html, body {
    margin: 0;
    height: 768px;
    overflow: hidden;
}
body {
    background: #000;
    font-family: "Open Sans", "Liberation Sans", sans-serif;
    color: #333;
    display: flex;
    flex-direction: column;
}
svg {
    display: block;
    flex: none;
}
.defs {
    position: absolute;
}
.spacer {
    flex: 1;
}

/* browser */
.chrome {
    height: 98px;
    flex: none;
    background: #fff;
}
.tabstrip {
    height: 34px;
    background: #dee1e6;
    display: flex;
    align-items: flex-end;
    padding-left: 8px;
}
.tab {
    width: 239px;
    height: 34px;
    display: flex;
    align-items: center;
    padding: 0 9px 1px 11px;
    font-family: Roboto, "Open Sans", sans-serif;
    font-size: 12.1px;
    color: #3c4043;
}
.tab-active {
    width: 241px;
    background: #fff;
    border-radius: 9px 9px 0 0;
    padding-left: 11px;
}
.tab-last {
    width: 238px;
    padding-left: 10px;
}
.fav {
    width: 16px;
    height: 16px;
    margin-right: 9px;
}
.tab-title {
    flex: 1;
    white-space: nowrap;
    letter-spacing: -.12px;
}
.tab-last .tab-title {
    font-size: 12.5px;
}
.tab-title-short {
    flex: none;
    width: 151px;
    font-size: 12px;
    letter-spacing: -.3px;
}
.tab-sound {
    width: 12px;
    height: 12px;
    margin: 0 9px 0 10px;
}
.tab-x {
    font-size: 11px;
    color: #45484c;
    width: 16px;
    text-align: center;
}
.tab-active .tab-x {
    margin-left: 1px;
}
.tab-sep {
    width: 1px;
    height: 20px;
    background: #9a9da1;
    align-self: center;
}
.tab-new {
    width: 14px;
    height: 14px;
    align-self: center;
    margin-left: 15px;
}
.win-menu {
    width: 15px;
    height: 15px;
    align-self: center;
    margin-right: 13px;
}
.win-btn {
    width: 12px;
    height: 12px;
    align-self: flex-start;
    margin: 9px 17px 0 17px;
}
.toolbar {
    height: 34px;
    display: flex;
    align-items: center;
    padding-left: 14px;
}
.nav {
    width: 16px;
    height: 16px;
    margin-right: 16px;
}
.omnibox {
    width: 1085px;
    height: 28px;
    margin-left: -4px;
    border-radius: 14px;
    background: #f1f3f4;
    display: flex;
    align-items: center;
    padding-left: 14px;
}
.lock {
    width: 10px;
    height: 13px;
    margin-right: 12px;
}
.url {
    font-family: Roboto, "Open Sans", sans-serif;
    font-size: 14px;
    color: #5f6368;
    white-space: nowrap;
    letter-spacing: -.07px;
    width: 1012px;
}
.url b {
    font-weight: 400;
    color: #202124;
}
.star {
    width: 16px;
    height: 16px;
    margin-left: 15px;
}
.ext {
    display: flex;
    align-items: center;
    margin-left: 16px;
}
.ext-i {
    width: 16px;
    height: 16px;
    margin-right: 16px;
}
.ext-av {
    width: 22px;
    height: 22px;
    margin-left: -3px;
}
.ext-dots {
    width: 4px;
    height: 16px;
    margin-left: 17px;
}
.bookmarks {
    height: 30px;
    display: flex;
    align-items: center;
    padding: 1px 14px 0 15px;
    font-family: Roboto, "Open Sans", sans-serif;
    font-size: 12.3px;
    color: #3c4043;
}
.bm {
    display: flex;
    align-items: center;
    white-space: nowrap;
}
.bm-i {
    width: 16px;
    height: 16px;
    margin-right: 7px;
}
.bm-apps {
    width: 67px;
}
.bm-gmail {
    width: 71px;
}
.bm-yt {
    width: 87px;
}
.bm-maps {
    width: 69px;
}
.bm-tr {
    width: 87px;
}
.bm-mod {
    width: 148px;
}
.bm-cou {
    width: 151px;
}
.bm-home {
    width: 152px;
}
.bm-zip {
    width: 150px;
}
.bm-more {
    font-size: 14px;
    margin-right: 9px;
}
.bm-sep {
    width: 1px;
    height: 20px;
    background: #ccc;
    margin-right: 10px;
}

/* zoom stage */
.stage {
    height: 630px;
    flex: none;
    background: #000;
    display: flex;
    padding-top: 5px;
    padding-left: 27px;
}
.rec {
    width: 146px;
    padding-top: 23px;
    display: flex;
    align-items: flex-start;
    font-family: "Liberation Sans", sans-serif;
    font-size: 9.5px;
    font-weight: 700;
    line-height: 11px;
    color: #ddd;
}
.rec-dot {
    width: 5px;
    height: 5px;
    border-radius: 50%;
    background: #f0565a;
    margin: 3px 7px 0 0;
}
.share {
    position: relative;
    width: 1020px;
    height: 573px;
    border: 3px solid #48c000;
    border-top-width: 2px;
    border-bottom-width: 2px;
    display: flex;
    flex-direction: column;
    background: #f3f2f1;
}
.banner {
    position: absolute;
    top: -2px;
    left: 285px;
    width: 319px;
    height: 24px;
    background: #6fb432;
    border-radius: 0 0 0 6px;
    display: flex;
    align-items: center;
    padding-left: 10px;
    font-size: 15.1px;
    color: #2b3a1f;
    white-space: nowrap;
    letter-spacing: -.05px;
}
.banner-mic {
    width: 14px;
    height: 14px;
    margin-left: 4px;
}
.banner-rec {
    width: 14px;
    height: 14px;
    margin-left: 8px;
}
.view-options {
    position: absolute;
    top: -2px;
    left: 604px;
    width: 125px;
    height: 24px;
    background: #1f2124;
    border-radius: 0 0 6px 0;
    color: #fff;
    font-size: 15.3px;
    display: flex;
    align-items: center;
    padding-left: 7px;
    white-space: nowrap;
}
.vo-chev {
    width: 12px;
    height: 7px;
    margin-left: 5px;
}
.titlebar {
    height: 23px;
    flex: none;
    background: #b7472a;
    display: flex;
    align-items: center;
    font-size: 9px;
    color: #f8e6e0;
    padding-left: 13px;
}
.autosave {
    width: 42px;
}
.toggle {
    width: 29px;
    height: 11px;
    border: 1px solid #f6ddd6;
    border-radius: 6px;
    display: flex;
    align-items: center;
    justify-content: flex-end;
    font-size: 7px;
    padding-right: 3px;
    gap: 3px;
}
.toggle i {
    width: 5px;
    height: 5px;
    border-radius: 50%;
    background: #fff;
}
.tb-i {
    width: 14px;
    height: 14px;
}
.tb-save {
    margin-left: 8px;
}
.tb-undo {
    margin-left: 7px;
}
.tb-redo {
    margin-left: 16px;
}
.tb-pres {
    margin-left: 7px;
}
.tb-more {
    margin-left: 7px;
}
.doc-name {
    margin-left: 61px;
}
.user {
    margin-right: 8px;
}
.avatar {
    width: 18px;
    height: 18px;
    border-radius: 50%;
    background: #4a63c9;
    text-align: center;
    line-height: 18px;
    font-size: 8px;
    color: #e6eaff;
    margin-right: 18px;
}
.tb-min {
    margin-left: 21px;
}
.tb-max {
    margin-left: 20px;
}
.tb-close {
    margin-left: 21px;
    margin-right: 7px;
}
.tabs {
    height: 22px;
    flex: none;
    display: flex;
    align-items: center;
    gap: 22px;
    padding-left: 10px;
    font-size: 9px;
    color: #555;
}
.tabs-on {
    height: 22px;
    line-height: 22px;
    color: #333;
    border-bottom: 2px solid #b7472a;
}
.tabs-ctx {
    color: #b7472a;
}
.tabs-btn {
    display: flex;
    align-items: center;
    height: 18px;
    background: #fff;
    color: #b7472a;
    font-weight: 600;
    padding: 0 4px;
    gap: 3px;
}
.tabs-btn-i {
    width: 10px;
    height: 10px;
}
.tabs-share {
    width: 52px;
    margin-right: -17px;
    padding-left: 5px;
}
.tabs-comm {
    width: 73px;
    margin-right: 7px;
}

/* ribbon */
.ribbon {
    position: relative;
    height: 72px;
    flex: none;
    display: flex;
    font-size: 8.6px;
    color: #555;
    box-shadow: 0 2px 3px #bbb;
    z-index: 1;
    background: #f3f2f1;
    padding-top: 2px;
}
.grp {
    display: flex;
    flex-direction: column;
    border-right: 1px solid #d4d2d0;
    height: 69px;
    padding: 0;
}
.grp-clip {
    width: 68px;
    padding-left: 8px;
}
.grp-slides {
    width: 134px;
    padding-left: 8px;
}
.grp-font {
    width: 220px;
    padding-left: 6px;
}
.grp-para {
    width: 161px;
    padding-left: 7px;
}
.grp-draw {
    width: 197px;
    padding-left: 7px;
}
.grp-edit {
    width: 76px;
    padding-left: 6px;
}
.grp-voice {
    width: 44px;
}
.grp-design {
    width: 42px;
}
.grp-body {
    flex: 1;
    min-height: 0;
    display: flex;
}
.grp-label {
    position: relative;
    height: 10px;
    line-height: 10px;
    text-align: center;
    white-space: nowrap;
    color: #555;
}
.launch {
    position: absolute;
    right: 1px;
    top: 1px;
    width: 7px;
    height: 7px;
    border-left: 1px solid #777;
    border-top: 1px solid #777;
}
.big {
    display: flex;
    flex-direction: column;
    align-items: center;
    line-height: 12px;
    white-space: nowrap;
}
.big-i {
    width: 22px;
    height: 22px;
    margin-bottom: 4px;
}
.big-i-lg {
    width: 26px;
    height: 26px;
    margin-bottom: 1px;
}
.big-paste {
    width: 24px;
    padding-top: 3px;
}
.big-gap {
    margin-top: 4px;
}
.big-new {
    width: 30px;
    padding-top: 2px;
}
.big-reuse {
    width: 30px;
    margin-left: 3px;
    padding-top: 3px;
}
.big-draw {
    width: 32px;
    padding-top: 3px;
    margin-right: 3px;
}
.big-dict {
    width: 44px;
    padding-top: 2px;
}
.off {
    color: #aaa;
}
.chev {
    font-size: 8px;
    line-height: 8px;
    font-weight: 400;
    color: #666;
}
.chev-far {
    margin-left: 6px;
}
.col {
    display: flex;
    flex-direction: column;
    gap: 4px;
    padding-top: 2px;
}
.row {
    display: flex;
    align-items: center;
    gap: 3px;
    white-space: nowrap;
}
.ico {
    width: 14px;
    height: 14px;
}
.col-clip {
    margin-left: 5px;
    gap: 5px;
}
.col-slides {
    margin-left: 2px;
    padding-top: 3px;
}
.col-draw {
    margin-left: 1px;
    padding-top: 3px;
    gap: 6px;
}
.col-draw .row {
    gap: 1px;
    height: 12px;
}
.col-draw .ico {
    width: 12px;
    height: 12px;
}
.col-para {
    margin-left: 8px;
    padding-top: 3px;
    gap: 6px;
}
.col-para .row {
    height: 12px;
}
.grp-rows {
    flex-direction: column;
    display: flex;
    gap: 6px;
    padding-top: 8px;
}
.grp-para-body {
    justify-content: flex-start;
}
.box {
    height: 16px;
    background: #fff;
    border: 1px solid #c8c6c4;
    display: flex;
    align-items: center;
    justify-content: space-between;
    padding: 0 3px;
    font-family: "Liberation Sans", sans-serif;
    font-size: 9px;
}
.box-font {
    width: 115px;
}
.box-size {
    width: 34px;
    margin-left: -2px;
}
.glyph-a {
    font-size: 12px;
    margin-left: 2px;
    width: 14px;
    display: flex;
}
.glyph-a sup {
    font-size: 7px;
    line-height: 8px;
    color: #2a6fb0;
}
.glyph-a2 {
    font-size: 10px;
}
.glyph-clear {
    position: relative;
}
.eraser {
    width: 8px;
    height: 8px;
    margin-top: 6px;
    margin-left: -2px;
}
.vsep {
    width: 1px;
    height: 16px;
    background: #ccc;
    margin: 0 3px;
}
.font-row2 {
    gap: 0;
    height: 18px;
}
.fmt {
    font-family: "Liberation Sans", sans-serif;
    font-size: 10px;
    width: 17px;
    text-align: center;
    color: #555;
}
.fmt-ab {
    color: #aaa;
    width: 21px;
}
.fmt-av {
    width: 20px;
    font-size: 9px;
    color: #333;
    margin-left: -1px;
}
.fmt-aa {
    width: 19px;
    margin-left: 5px;
}
.fmt-hl {
    width: 18px;
}
.fmt-col {
    width: 18px;
    margin-left: 4px;
}
.para-on {
    display: flex;
    align-items: center;
    gap: 3px;
    background: #dcdad8;
    border: 1px solid #bdbbb9;
    height: 18px;
    padding: 0 2px;
}
.para-bul {
    width: 27px;
}
.para-left {
    width: 18px;
}
.para-row1 {
    gap: 5px;
    height: 16px;
}
.para-row2 {
    gap: 6px;
}
.grp-para .ico {
    width: 12px;
    height: 12px;
}
.para-ic {
    display: flex;
    align-items: center;
    gap: 2px;
}
.para-in {
    margin-left: 2px;
}
.para-cols {
    margin-left: 8px;
}
.ribbon-fold {
    position: absolute;
    right: 6px;
    bottom: 2px;
    width: 10px;
    height: 6px;
}

/* thumbnails and slide */
.workspace {
    flex: 1;
    min-height: 0;
    display: flex;
    background: #e6e6e6;
}
.thumbs {
    width: 92px;
    flex: none;
    display: flex;
    border-right: 1px solid #d3d3d3;
    margin-bottom: 2px;
}
.thumb-list {
    width: 78px;
    padding-top: 9px;
    overflow: hidden;
}
.t-row {
    height: 44.7px;
    display: flex;
    color: #666;
    line-height: 10px;
}
.t-num {
    width: 23px;
    padding-left: 1px;
    font-size: 11.5px;
    margin-top: -1px;
}
.thumb {
    width: 39px;
    height: 30px;
    background: #fff;
    border: 1px solid #ccc;
}
.t-on .t-num {
    color: #d0504a;
}
.t-on .thumb {
    outline: 2px solid #b7472a;
    outline-offset: 1px;
}
.t-scroll, .e-scroll {
    display: flex;
    flex-direction: column;
    align-items: center;
    padding-top: 3px;
}
.t-scroll {
    width: 11px;
    background: #dedede;
    margin-right: 3px;
}
.sc-btn {
    width: 100%;
    height: 11px;
    flex: none;
    background: #f5f5f5;
    font-size: 6px;
    line-height: 11px;
    text-align: center;
    color: #555;
}
.sc-track {
    flex: 1;
    width: 100%;
    position: relative;
    display: flex;
    flex-direction: column;
}
.sc-thumb {
    display: block;
    margin-top: 195px;
    height: 117px;
    background: #fff;
    border: 1px solid #ccc;
}
.editor {
    flex: 1;
    padding: 10px 0 0 200px;
}
.slide {
    width: 515px;
    height: 386px;
    background: #fff;
    box-shadow: 0 0 2px #bbb;
}
.slide-title {
    margin: 0;
    height: 59px;
    padding-left: 26px;
    font-family: "Liberation Sans", sans-serif;
    font-size: 22.9px;
    font-weight: 700;
    line-height: 53px;
    color: #d9163f;
}
.frame {
    position: relative;
    width: 472px;
    height: 297px;
    margin-left: 25px;
    border: 1px dotted #999;
}
.list {
    list-style: none;
    margin: -2px 0 0;
    padding: 0 0 0 2px;
    font-family: "Liberation Sans", sans-serif;
    color: #111;
}
.head {
    display: flex;
    align-items: center;
    height: 14px;
    line-height: 14px;
    white-space: nowrap;
    font-size: 12.2px;
}
.sq {
    width: 5px;
    height: 5px;
    background: #d9163f;
    margin-right: 10px;
    margin-top: -4px;
}
.head-link {
    color: #888;
}
.head-link > span {
    text-decoration: underline;
}
.spell {
    border-bottom: 1px dotted #d33;
}
.sub {
    display: flex;
    align-items: center;
    height: 12px;
    line-height: 12px;
    white-space: nowrap;
    font-size: 12.2px;
    padding-left: 15px;
}
.sub a {
    color: #777;
    text-decoration: underline;
}
.sub-plain {
    color: #111;
}
.dash {
    width: 6px;
    height: 1px;
    background: #cf8a9a;
    margin-right: 10px;
}
.sel {
    width: 4px;
    height: 11px;
    background: #ccc;
    margin-left: 1px;
}
.li1 .head, .li2 .head, .li3 .head {
    font-size: 13.7px;
}
.li1 .sub {
    margin-top: -1px;
    font-size: 12.15px;
}
.li2 {
    margin-top: 11px;
}
.li2 .sub {
    margin-top: 1px;
    font-size: 13.6px;
}
.li3 {
    margin-top: 13px;
}
.li3 .sub {
    margin-top: -1px;
    font-size: 13.6px;
}
.li4 {
    margin-top: 12px;
}
.li4 .sub {
    margin-top: -1px;
}
.li5 {
    margin-top: 11px;
}
.li5 .sub {
    margin-top: -3px;
}
.li6 {
    margin-top: 11px;
}
.li6 .sub {
    margin-top: -2px;
}
.li7 {
    margin-top: 10px;
}
.li7 .sub {
    margin-top: -1px;
}
.li8 {
    margin-top: 10px;
}
.li8 .sub {
    margin-top: -1px;
}
.hd {
    position: absolute;
    width: 9px;
    height: 9px;
    border-radius: 50%;
    background: #fff;
    border: 1.5px solid #888;
}
.hd-tl, .hd-tc, .hd-tr {
    top: -5px;
}
.hd-ml, .hd-mr {
    top: 142px;
}
.hd-bl, .hd-bc, .hd-br {
    bottom: -5px;
}
.hd-tl, .hd-ml, .hd-bl {
    left: -5px;
}
.hd-tc, .hd-bc {
    left: 231px;
}
.hd-tr, .hd-mr, .hd-br {
    right: -5px;
}
.rot-line {
    position: absolute;
    left: 235px;
    top: -18px;
    width: 1px;
    height: 14px;
    background: #999;
}
.rot {
    position: absolute;
    left: 227px;
    top: -35px;
    width: 19px;
    height: 19px;
}
.ibeam {
    position: absolute;
    left: 200px;
    top: 159px;
    width: 7px;
    height: 13px;
}
.autofit {
    position: absolute;
    left: -26px;
    top: 281px;
    width: 16px;
    height: 14px;
    background: #fff;
    border: 1px solid #aaa;
    padding: 0 1px;
}
.e-scroll {
    width: 10px;
    flex: none;
    background: #e6e6e6;
    padding-bottom: 14px;
}
.e-scroll .sc-btn {
    background: #efefef;
}
.e-scroll .sc-btn:nth-last-child(-n+2) {
    background: transparent;
    margin-top: 3px;
    font-size: 9px;
}
.sc-thumb-r {
    display: block;
    margin-top: 233px;
    height: 12px;
    background: #fff;
    border: 1px solid #ccc;
}

/* status */
.status {
    height: 16px;
    flex: none;
    display: flex;
    align-items: center;
    padding-left: 3px;
    font-size: 8.2px;
    color: #666;
    background: #f3f2f1;
}
.st-i {
    width: 12px;
    height: 11px;
}
.st-slide {
    margin-right: 13px;
}
.status > .st-i:first-of-type {
    margin-right: 13px;
}
.st-notes {
    display: flex;
    align-items: center;
    gap: 2px;
    font-size: 8.5px;
    margin-right: 13px;
}
.st-view {
    width: 30px;
    height: 16px;
    display: flex;
    align-items: center;
    justify-content: center;
}
.st-view-on {
    background: #d8d6d4;
}
.zoom-minus, .zoom-plus {
    font-size: 11px;
}
.zoom-minus {
    margin-left: 3px;
}
.zoom-track {
    width: 76px;
    height: 1px;
    background: #999;
    margin: 0 2px 0 5px;
    position: relative;
}
.zoom-track i {
    position: absolute;
    left: 25px;
    top: -4px;
    width: 3px;
    height: 9px;
    background: #666;
}
.zoom-pct {
    margin-left: 8px;
}
.st-fit {
    margin: 0 1px 0 9px;
}

/* remote windows taskbar */
.rtask {
    height: 28px;
    flex: none;
    background: #cfe2ee;
    display: flex;
    align-items: center;
    padding-left: 8px;
    font-size: 11px;
}
.rt-win {
    width: 13px;
    height: 13px;
    color: #111;
}
.rt-search {
    width: 256px;
    height: 28px;
    margin-left: 13px;
    background: #fff;
    display: flex;
    align-items: center;
    padding-left: 8px;
    font-size: 11px;
    color: #444;
}
.rt-lens {
    width: 11px;
    height: 12px;
    margin-right: 9px;
}
.rt-ic {
    position: relative;
    width: 31px;
    height: 28px;
    display: flex;
    align-items: center;
    justify-content: center;
}
.rt-ic svg {
    width: 17px;
    height: 17px;
}
.rt-first {
    margin-left: 2px;
}
.rt-view {
    margin-left: 5px;
    margin-right: 5px;
}
.rt-ppt {
    background: #dfeaf1;
    border-right: 1px solid #a9c0cf;
    width: 33px;
    margin-left: 1px;
}
.rt-word {
    margin-left: 1px;
}
.rt-teams {
    background: #f5ab7b;
}
.rt-badge {
    position: absolute;
    right: 3px;
    bottom: 1px;
    width: 14px;
    height: 10px;
    border-radius: 5px;
    background: #c4262e;
    color: #fff;
    font-size: 7px;
    line-height: 10px;
    text-align: center;
    font-weight: 700;
}
.rt-weather svg {
    width: 17px;
    height: 16px;
}
.rt-weather {
    margin-left: 19px;
}
.rt-temp {
    padding-left: 4px;
    color: #444;
    font-size: 10px;
}
.rt-tr {
    height: 13px;
}
.rt-caret {
    width: 11px;
    margin-left: 17px;
    height: 8px;
}
.rt-mic {
    width: 8px;
    margin-left: 9px;
}
.rt-kb {
    width: 12px;
    height: 9px;
    margin-left: 8px;
}
.rt-eng {
    font-size: 8.5px;
    margin-left: 7px;
    color: #444;
}
.rt-clock {
    font-size: 8.5px;
    line-height: 13px;
    text-align: center;
    width: 56px;
    margin-left: 4px;
    color: #444;
}
.rt-note {
    position: relative;
    margin-left: 2px;
    width: 24px;
}
.rt-note svg {
    width: 13px;
    height: 13px;
    margin-left: 4px;
}
.rt-note b {
    position: absolute;
    left: 8px;
    top: 5px;
    width: 14px;
    height: 12px;
    border-radius: 50%;
    background: #d5dde2;
    border: 1px solid #888;
    font-size: 8px;
    font-weight: 400;
    line-height: 10px;
    text-align: center;
}

/* local taskbar */
.taskbar {
    height: 40px;
    flex: none;
    background: #272727;
    display: flex;
    align-items: center;
    color: #fff;
}
.task-win {
    width: 16px;
    height: 16px;
    margin-left: 16px;
    color: #fff;
}
.task-search {
    width: 344px;
    height: 40px;
    margin-left: 16px;
    background: #f2f2f2;
    border-bottom: 2px solid #ccc;
    display: flex;
    align-items: center;
    padding-left: 14px;
    color: #222;
    font-size: 14px;
}
.task-lens {
    width: 16px;
    height: 16px;
    margin-right: 10px;
}
.ti {
    position: relative;
    width: 49px;
    height: 40px;
    display: flex;
    align-items: center;
    justify-content: center;
    flex: none;
}
.ti svg {
    width: 20px;
    height: 20px;
}
.ti-sm svg {
    width: 15px;
    height: 16px;
}
.ti .ti-sq {
    width: 24px;
    height: 24px;
}
.ti-open::after {
    content: "";
    position: absolute;
    left: 4px;
    right: 5px;
    bottom: 0;
    height: 2px;
    background: #76b9ed;
}
.ti-chrome {
    background: #4a4a4a;
}
.ti-chrome::after {
    content: "";
    position: absolute;
    left: 0;
    right: 0;
    bottom: 0;
    height: 2px;
    background: #76b9ed;
}
.ti .ti-over {
    position: absolute;
    left: 26px;
    top: 20px;
    width: 15px;
    height: 15px;
}
.batt {
    position: relative;
    width: 49px;
    height: 20px;
    margin-left: 17px;
    background: #000;
    border: 2px solid #fff;
    display: block;
}
.batt::after {
    content: "";
    position: absolute;
    right: -5px;
    top: 3px;
    width: 2px;
    height: 10px;
    background: #fff;
}
.batt-fill {
    display: block;
    width: 18px;
    height: 16px;
    background: #1f9a4b;
}
.batt-txt {
    position: absolute;
    inset: 0;
    text-align: center;
    font-size: 14px;
    line-height: 16px;
}
.tray {
    width: 16px;
    height: 16px;
    margin-left: 6px;
}
.tray-caret {
    width: 14px;
    height: 8px;
    margin-left: 0;
}
.tray-wifi {
    margin-left: 10px;
    margin-right: 1px;
}
.task-lang {
    width: 30px;
    margin-left: 8px;
    text-align: center;
    font-size: 12px;
    line-height: 20px;
}
.task-clock {
    width: 60px;
    margin-left: 3px;
    text-align: center;
    font-size: 12px;
    line-height: 20px;
}
.task-note {
    width: 16px;
    height: 16px;
    margin: 0 26px 0 15px;
}
```
